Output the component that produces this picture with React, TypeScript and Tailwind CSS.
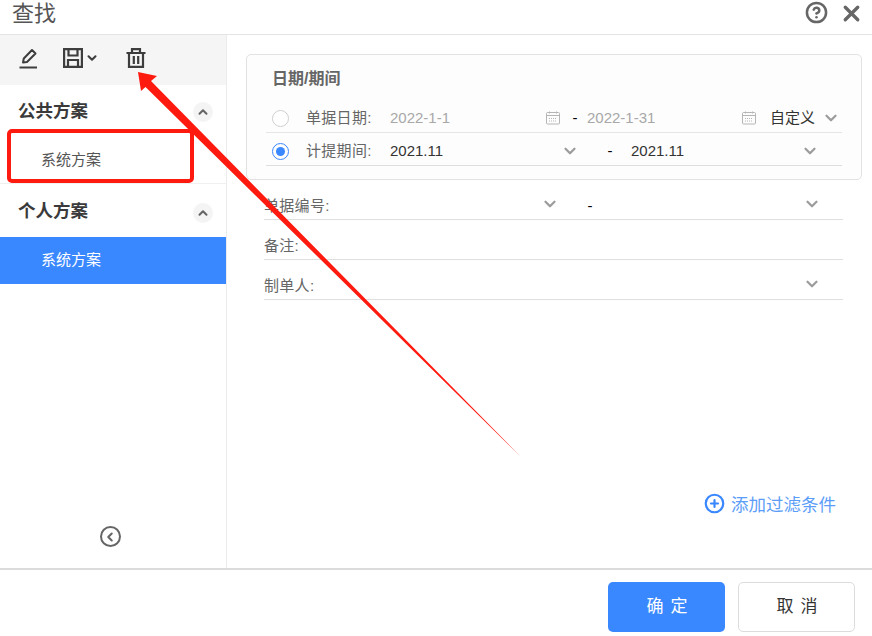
import { ChevronDown, ChevronUp, X, CircleHelp, CirclePlus, ChevronLeft } from "lucide-react";

const cjk = { fontFamily: '"Liberation Sans", "Noto Sans CJK SC", sans-serif' };

function Calendar() {
  return (
    <svg width="14" height="14" viewBox="0 0 14 14" fill="none" stroke="#b5b5b5" strokeWidth="1">
      <rect x="0.5" y="1.5" width="13" height="11.5" rx="1" />
      <path d="M0.5 4.5H13.5M3.5 0.5V2.5M10.5 0.5V2.5" />
      <path d="M3 7.5H11M3 10H11" strokeDasharray="1 1" />
    </svg>
  );
}

function Chevron() {
  return <ChevronDown className="w-[18px] h-[18px] text-[#9c9c9c]" strokeWidth={3} />;
}

function SideTitle({ title, className }: { title: string; className: string }) {
  return (
    <div className={`flex items-center justify-between pl-[18px] pr-[13px] ${className}`}>
      <span className="text-[17.5px] font-bold text-[#3a3a3a]">{title}</span>
      <span className="w-5 h-5 mt-1 rounded-full bg-[#f4f4f4] flex items-center justify-center">
        <ChevronUp className="w-3.5 h-3.5 text-[#666]" strokeWidth={3.5} />
      </span>
    </div>
  );
}

function FieldRow({ label, left, right, dash }: { label: string; left?: boolean; right?: boolean; dash?: boolean }) {
  return (
    <div className="w-[579px] h-10 border-b border-[#dfdfdf] flex items-center text-[15px] text-[#666] pt-[13px]">
      <span className="w-[277px] tracking-[0.3px]">{label}</span>
      <span className="w-[18px] flex justify-center -mt-[4px]">{left && <Chevron />}</span>
      <span className="w-[52px] text-black text-center pl-[10px]">{dash && "-"}</span>
      <span className="flex-1" />
      {right && <span className="mr-[22px] flex -mt-[4px]"><Chevron /></span>}
    </div>
  );
}

export default function App() {
  return (
    <div className="relative w-[872px] h-[636px] bg-white flex flex-col overflow-hidden" style={cjk}>
      {/* Header */}
      <header className="h-[35px] shrink-0 border-b border-[#e4e4e4] flex items-center justify-between pl-3 pr-[8px]">
        <span className="text-[22px] leading-none text-[#555] -mt-[7px]">查找</span>
        <div className="flex items-center gap-[11px] -mt-[9px]">
          <CircleHelp className="w-[23px] h-[23px] text-[#666]" strokeWidth={2.6} />
          <X className="w-[25px] h-[25px] mt-[2px] text-[#666]" strokeWidth={3.2} />
        </div>
      </header>

      {/* Body */}
      <div className="flex-1 flex min-h-0">
        <aside className="w-[227px] shrink-0 border-r border-[#ececec] flex flex-col">
          <div className="h-[50px] bg-[#f5f5f5] flex items-center pl-[19px] pb-1 text-[#3d3d3d]">
            <svg width="19" height="21" viewBox="0 0 19 21" fill="none" stroke="currentColor" strokeWidth="2">
              <path d="M4 14.5L4.8 10.5L13 2L16.5 5.5L8 14Z" strokeLinejoin="round" />
              <path d="M0.5 19.5H18" />
            </svg>
            <svg className="ml-[25px]" width="20" height="20" viewBox="0 0 20 20" fill="none" stroke="currentColor" strokeWidth="2.2">
              <path d="M1.1 1.1H18.9V18.9H1.1Z" />
              <path d="M5.5 1.1V7.5H14.5V1.1M5 18.9V12H15V18.9" />
            </svg>
            <ChevronDown className="w-[14px] h-[14px] ml-[2px]" strokeWidth={3.5} />
            <svg className="ml-[27px]" width="20" height="20" viewBox="0 0 20 20" fill="none" stroke="currentColor" strokeWidth="2.2">
              <path d="M0.5 5H19.5M6 5V1.1H14V5" />
              <path d="M3 5V18.9H17V5M7.8 8V16M12.2 8V16" />
            </svg>
          </div>
          <SideTitle title="公共方案" className="h-[50px] [&>span:first-child]:pt-[2px]" />
          <div className="h-[49px] pl-[41px] pt-[2px] flex items-center text-[15px] text-[#555] border-b border-[#f0f0f0]">系统方案</div>
          <div className="h-[1px]" />
          <SideTitle title="个人方案" className="h-[52px]" />
          <div className="h-[47px] pl-[41px] flex items-center text-[15px] text-white bg-[#3a88ff]">系统方案</div>
          <div className="flex-1 flex items-end justify-center pb-[21px] pr-[6px]">
            <span className="w-[21px] h-[21px] rounded-full border-[2.5px] border-[#666] flex items-center justify-center">
              <ChevronLeft className="w-3.5 h-3.5 text-[#666] -ml-[1px]" strokeWidth={3.5} />
            </span>
          </div>
        </aside>

        <main className="flex-1 pt-[19px] pl-[19px] flex flex-col">
          <section className="w-[616px] h-[126px] rounded-[5px] border border-[#e2e2e2] bg-[#fdfdfd] pl-[19px] flex flex-col">
            <div className="h-[46px] pl-[6px] pt-[2px] flex items-center text-[16px] font-bold text-[#666]">日期/期间</div>
            <div className="w-[576px] h-[32px] border-b border-[#e6e6e6] flex items-center text-[15px] text-[#666] pt-[3px]">
              <span className="w-[17px] h-[17px] ml-[6px] rounded-full border border-[#cfcfcf] bg-white" />
              <span className="ml-[17px] w-[84px] tracking-[0.3px]">单据日期:</span>
              <span className="w-[156px] text-[#a8a8a8]">2022-1-1</span>
              <Calendar />
              <span className="w-[27px] pl-[3px] text-center text-black">-</span>
              <span className="w-[155px] text-[#a8a8a8]">2022-1-31</span>
              <Calendar />
              <span className="ml-[14px] text-[15px] text-[#333]">自定义</span>
              <span className="ml-[7px] flex"><Chevron /></span>
            </div>
            <div className="w-[576px] h-[33px] border-b border-[#dedede] flex items-center text-[15px] text-[#666] pt-[4px]">
              <span className="w-[17px] h-[17px] ml-[6px] rounded-full border border-[#3a88ff] bg-white flex items-center justify-center">
                <span className="w-[9px] h-[9px] rounded-full bg-[#3a88ff]" />
              </span>
              <span className="ml-[17px] w-[84px] tracking-[0.3px]">计提期间:</span>
              <span className="w-[171px] text-[#333]">2021.11</span>
              <Chevron />
              <span className="w-[52px] pl-[10px] text-center text-black">-</span>
              <span className="w-[170px] text-[#333]">2021.11</span>
              <Chevron />
            </div>
          </section>
          <div className="ml-[18px]">
            <FieldRow label="单据编号:" left dash right />
            <FieldRow label="备注:" />
            <FieldRow label="制单人:" right />
          </div>
          <div className="flex-1 flex items-end justify-end pr-[36px] pb-[50px]">
            <div className="flex items-center gap-[6px] text-[17.5px] text-[#5b9df8]">
              <CirclePlus className="w-[21px] h-[21px] -mt-[2px] text-[#3a88ff]" strokeWidth={2.5} />
              添加过滤条件
            </div>
          </div>
        </main>
      </div>

      {/* Footer */}
      <footer className="h-[68px] shrink-0 border-t-2 border-[#dcdcdc] flex items-start justify-end gap-[13px] pt-[12px] pr-[17px]">
        <button className="w-[117px] h-[50px] pl-[8px] rounded-[5px] bg-[#3a88ff] text-white text-[17px] tracking-[7px]">确定</button>
        <button className="w-[117px] h-[50px] pl-[8px] rounded-[5px] border border-[#dcdcdc] bg-white text-[#333] text-[17px] tracking-[7px]">取消</button>
      </footer>

      {/* Red annotations on the screenshot */}
      <div className="absolute left-[7px] top-[129px] w-[187px] h-[54px] rounded-[5px] border-[4px] border-[#ff1a10]" />
      <svg className="absolute left-0 top-0 pointer-events-none" width="872" height="636" viewBox="0 0 872 636">
        <polygon points="138,72 157,76 151,81 520,456 145.5,87 141,91" fill="#ff1a10" />
      </svg>
    </div>
  );
}
